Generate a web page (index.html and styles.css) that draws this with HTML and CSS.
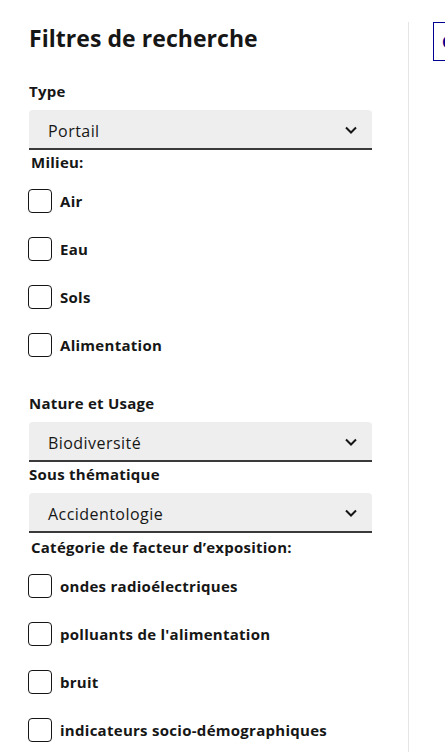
FILE: index.html
```html
<!DOCTYPE html>
<html lang="fr">
<head>
<meta charset="utf-8">
<title>Filtres de recherche</title>
<link rel="stylesheet" href="styles.css">
</head>
<body>
<div class="layout">
  <aside class="sidebar">
    <h2 class="title">Filtres de recherche</h2>

    <div class="field">
      <label class="label">Type</label>
      <div class="select"><span>Portail</span><svg class="chev" width="12" height="8" viewBox="0 0 12 8"><path d="M1 1.5 L6 6.5 L11 1.5" fill="none" stroke="#161616" stroke-width="2"/></svg></div>
    </div>

    <fieldset class="group">
      <legend class="legend">Milieu:</legend>
      <div class="check"><span class="box"></span><span class="ctext">Air</span></div>
      <div class="check"><span class="box"></span><span class="ctext">Eau</span></div>
      <div class="check"><span class="box"></span><span class="ctext">Sols</span></div>
      <div class="check"><span class="box"></span><span class="ctext">Alimentation</span></div>
    </fieldset>

    <div class="field field-spaced">
      <label class="label">Nature et Usage</label>
      <div class="select"><span>Biodiversité</span><svg class="chev" width="12" height="8" viewBox="0 0 12 8"><path d="M1 1.5 L6 6.5 L11 1.5" fill="none" stroke="#161616" stroke-width="2"/></svg></div>
    </div>

    <div class="field">
      <label class="label">Sous thématique</label>
      <div class="select"><span>Accidentologie</span><svg class="chev" width="12" height="8" viewBox="0 0 12 8"><path d="M1 1.5 L6 6.5 L11 1.5" fill="none" stroke="#161616" stroke-width="2"/></svg></div>
    </div>

    <fieldset class="group group-second">
      <legend class="legend">Catégorie de facteur d’exposition:</legend>
      <div class="check"><span class="box"></span><span class="ctext">ondes radioélectriques</span></div>
      <div class="check"><span class="box"></span><span class="ctext">polluants de l'alimentation</span></div>
      <div class="check"><span class="box"></span><span class="ctext">bruit</span></div>
      <div class="check"><span class="box"></span><span class="ctext">indicateurs socio-démographiques</span></div>
    </fieldset>
  </aside>
  <main class="main">
    <div class="btn"><span class="btn-text">Carte</span></div>
  </main>
</div>
</body>
</html>
```

FILE: styles.css
```css
* { box-sizing: border-box; }
html, body { margin: 0; padding: 0; background: #fff; overflow: hidden; }
body {
  font-family: "Open Sans", "Noto Sans", sans-serif;
  color: #161616;
  width: 445px;
  height: 752px;
}
.layout {
  display: flex;
  padding-top: 22px;
  height: 752px;
}
.sidebar {
  width: 409px;
  flex: none;
  padding: 0 36px 0 29px;
  border-right: 1px solid #e5e5e5;
}
.title {
  margin: 0 0 25px;
  font-size: 23px;
  line-height: 32px;
  font-weight: 700;
  letter-spacing: 0.05px;
}
.field { display: flex; flex-direction: column; }
.field-spaced { margin-top: 10px; }
.label {
  font-size: 15px;
  font-weight: 700;
  line-height: 24px;
  margin-bottom: 7px;
  letter-spacing: 0.25px;
}
.select {
  height: 40px;
  background: #eeeeee;
  border-radius: 4px 4px 0 0;
  box-shadow: inset 0 -2px 0 0 #3a3a3a;
  display: flex;
  align-items: center;
  justify-content: space-between;
  padding: 2px 15px 0 19px;
  font-size: 16px;
  letter-spacing: 0.45px;
}
.chev { display: block; margin-top: -3px; }
.group {
  border: 0;
  margin: 0;
  padding: 0;
  min-width: 0;
}
.group-second { margin-top: 2px; }
.legend {
  padding: 0 0 0 2px;
  font-size: 15px;
  font-weight: 700;
  line-height: 24px;
  margin-bottom: 15px;
  letter-spacing: 0.25px;
}
.check {
  display: flex;
  align-items: center;
  gap: 8px;
  height: 24px;
  margin-left: -1px;
  margin-bottom: 24px;
}
.box {
  width: 24px;
  height: 24px;
  border: 1px solid #161616;
  border-radius: 4px;
  flex: none;
}
.ctext {
  font-size: 15px;
  font-weight: 700;
  letter-spacing: 0.28px;
}
.main {
  flex: 1;
  padding-left: 24px;
  overflow: hidden;
}
.btn {
  width: 120px;
  height: 39px;
  border: 1px solid #000091;
  display: flex;
  align-items: center;
  padding-left: 8px;
  color: #000091;
  font-size: 16px;
  font-weight: 700;
}
```
